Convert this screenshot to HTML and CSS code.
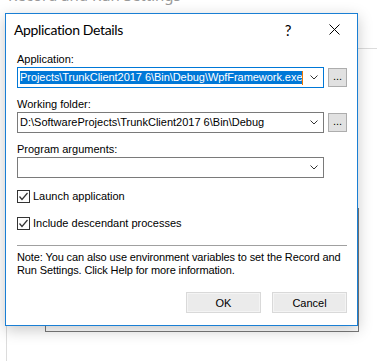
FILE: index.html
```html
<!DOCTYPE html>
<html lang="en">
<head>
  <meta charset="UTF-8">
  <meta name="viewport" content="width=device-width, initial-scale=1.0">
  <title>Application Details</title>
  <link rel="stylesheet" href="styles.css">
</head>
<body>
<div class="desktop">
  <div class="bg-title">Record and Run Settings</div>
  <div class="bg-panel"></div>
  <div class="bg-window"></div>

  <div class="dialog">
    <div class="titlebar">
      <span class="title">Application Details</span>
      <span class="title-btn help">?</span>
      <span class="title-btn close">
        <svg width="11" height="11" viewBox="0 0 11 11"><path d="M0.5 0.5 L10.5 10.5 M10.5 0.5 L0.5 10.5" stroke="#000" stroke-width="1" fill="none"/></svg>
      </span>
    </div>

    <div class="content">
      <div class="field">
        <label>Application:</label>
        <div class="row">
          <div class="combo focused">
            <span class="combo-text"><span class="selected">Projects\TrunkClient2017 6\Bin\Debug\WpfFramework.exe</span><span class="caret"></span></span>
            <svg class="chevron" width="8" height="5" viewBox="0 0 8 5"><path d="M0.5 0.5 L4 4 L7.5 0.5" stroke="#333" fill="none"/></svg>
          </div>
          <button class="browse">...</button>
        </div>
      </div>

      <div class="field">
        <label>Working folder:</label>
        <div class="row">
          <div class="combo">
            <span class="combo-text">D:\SoftwareProjects\TrunkClient2017 6\Bin\Debug</span>
            <svg class="chevron" width="8" height="5" viewBox="0 0 8 5"><path d="M0.5 0.5 L4 4 L7.5 0.5" stroke="#333" fill="none"/></svg>
          </div>
          <button class="browse">...</button>
        </div>
      </div>

      <div class="field">
        <label>Program arguments:</label>
        <div class="row">
          <div class="combo">
            <span class="combo-text"></span>
            <svg class="chevron" width="8" height="5" viewBox="0 0 8 5"><path d="M0.5 0.5 L4 4 L7.5 0.5" stroke="#333" fill="none"/></svg>
          </div>
        </div>
      </div>

      <div class="check first">
        <span class="box"><svg width="11" height="11" viewBox="0 0 11 11"><path d="M1.5 5.5 L4 8.5 L9.5 2" stroke="#333" stroke-width="1.2" fill="none"/></svg></span>
        <span>Launch application</span>
      </div>
      <div class="check">
        <span class="box"><svg width="11" height="11" viewBox="0 0 11 11"><path d="M1.5 5.5 L4 8.5 L9.5 2" stroke="#333" stroke-width="1.2" fill="none"/></svg></span>
        <span>Include descendant processes</span>
      </div>

      <div class="sep"></div>

      <p class="note">Note: You can also use environment variables to set the Record and Run Settings. Click Help for more information.</p>

      <div class="actions">
        <button class="btn">OK</button>
        <button class="btn">Cancel</button>
      </div>
    </div>
  </div>
</div>
</body>
</html>
```

FILE: styles.css
```css
body {
  margin: 0;
  background: #fff;
  font-family: "Liberation Sans", Arial, sans-serif;
  font-size: 11px;
  color: #000;
}
.desktop {
  position: relative;
  width: 377px;
  height: 361px;
  overflow: hidden;
}
.bg-title {
  position: absolute;
  left: 8px;
  top: -15px;
  font-family: "Noto Sans", sans-serif;
  font-size: 15px;
  color: #999;
}
.bg-panel {
  position: absolute;
  left: 6px;
  top: 48px;
  width: 400px;
  height: 400px;
  border-left: 1px solid #dcdcdc;
  border-top: 1px solid #dcdcdc;
}
.bg-window {
  position: absolute;
  left: 45px;
  top: 208px;
  width: 312px;
  height: 122px;
  border: 1px solid #7a7a7a;
  background: #fff;
}
.dialog {
  position: absolute;
  left: 5px;
  top: 13px;
  width: 353px;
  height: 313px;
  box-sizing: border-box;
  border: 1px solid #1a7fd4;
  background: #fff;
  box-shadow: 0 4px 14px rgba(0, 0, 0, 0.22);
}
.titlebar {
  display: flex;
  align-items: center;
  height: 31px;
  padding-left: 8px;
}
.title {
  flex: 1;
  font-family: Lato, sans-serif;
  font-size: 14px;
  letter-spacing: -0.35px;
}
.title-btn {
  width: 46px;
  height: 31px;
  display: flex;
  align-items: center;
  justify-content: center;
}
.help {
  font-family: Lato, sans-serif;
  font-size: 15px;
}
.content {
  padding: 8px 10px 0 11px;
}
.field + .field {
  margin-top: 10px;
}
.field label {
  display: block;
  line-height: 13px;
  margin-bottom: 1px;
}
.row {
  display: flex;
  align-items: center;
  gap: 4px;
}
.combo {
  width: 307px;
  height: 21px;
  box-sizing: border-box;
  border: 1px solid #7a7a7a;
  display: flex;
  align-items: center;
  padding-left: 2px;
}
.combo.focused {
  border-color: #0078d7;
}
.combo-text {
  flex: 1;
  display: flex;
  align-items: center;
  white-space: nowrap;
  overflow: hidden;
  line-height: 13px;
}
.selected {
  background: #0078d7;
  color: #fff;
  letter-spacing: -0.05px;
}
.caret {
  width: 1px;
  height: 14px;
  background: #f07800;
}
.chevron {
  margin: 0 5px 0 4px;
}
.browse {
  width: 19px;
  height: 19px;
  padding: 0 0 4px;
  border: 1px solid #adadad;
  background: #e1e1e1;
  font-family: "Liberation Sans", Arial, sans-serif;
  font-size: 11px;
  line-height: 10px;
}
.check {
  display: flex;
  align-items: center;
  gap: 3px;
  height: 13px;
  line-height: 13px;
  margin-top: 14px;
}
.check.first {
  margin-top: 12px;
}
.box {
  width: 13px;
  height: 13px;
  box-sizing: border-box;
  border: 1px solid #333;
  display: flex;
  align-items: center;
  justify-content: center;
}
.sep {
  height: 1px;
  background: #a0a0a0;
  margin: 15px 0 0;
  width: 330px;
}
.note {
  margin: 5px 0 0;
  line-height: 13px;
  width: 330px;
  letter-spacing: -0.12px;
}
.actions {
  display: flex;
  justify-content: flex-end;
  gap: 11px;
  margin-top: 15px;
}
.btn {
  width: 75px;
  height: 21px;
  border: 1px solid #d9d9d9;
  background: #ebebeb;
  box-shadow: inset 0 0 0 1px #f4f4f4;
  font-family: "Liberation Sans", Arial, sans-serif;
  font-size: 11px;
  padding: 0;
}
```
